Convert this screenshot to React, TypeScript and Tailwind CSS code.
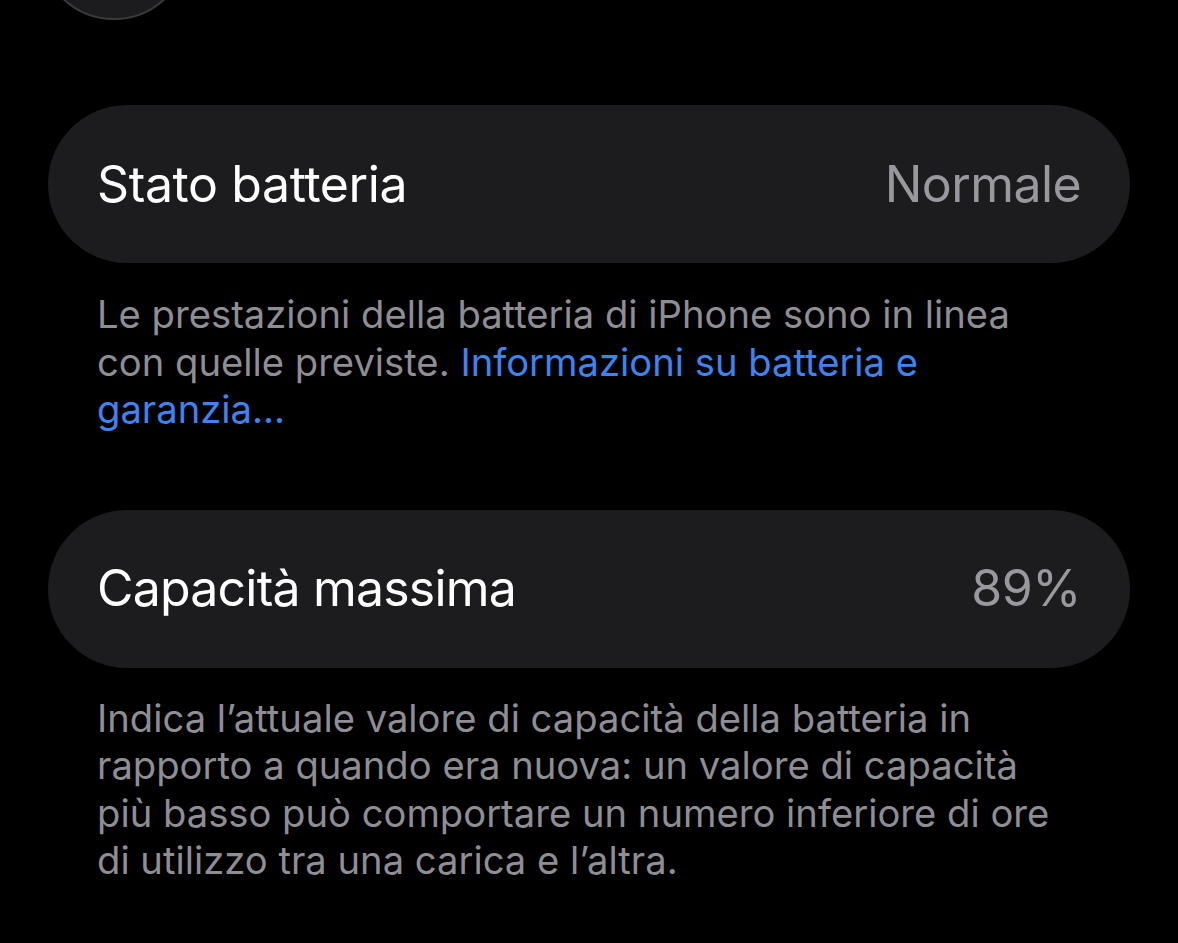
export default function App() {
  return (
    <div className="min-h-[943px] w-[1178px] overflow-hidden bg-black" style={{ fontFamily: "Inter, 'Noto Sans', sans-serif" }}>
      <div className="-mt-[130px] ml-[39px] h-[150px] w-[150px] rounded-full border-2 border-[#3a3a3c] bg-[#1c1c1e]" />
      <div className="mx-[48px] mt-[85px]">
        <div className="flex h-[158px] items-center justify-between rounded-full bg-[#1c1c1e] px-[49px]">
          <span className="text-[50px] tracking-[-0.4px] text-white">Stato batteria</span>
          <span className="text-[50px] tracking-[-0.6px] text-[#98989f]">Normale</span>
        </div>
        <p className="mt-[28px] pl-[49px] pr-[40px] text-[38.2px] leading-[47.5px] text-[#8e8e93]">
          Le prestazioni della batteria di iPhone sono in linea
          <br />
          con quelle previste. <span className="text-[#3d84f0]">Informazioni su batteria e</span>
          <br />
          <span className="text-[#3d84f0]">garanzia...</span>
        </p>
        <div className="mt-[76px] flex h-[158px] items-center justify-between rounded-full bg-[#1c1c1e] px-[49px]">
          <span className="text-[50px] tracking-[-0.8px] text-white">Capacità massima</span>
          <span className="text-[50px] tracking-[-0.4px] text-[#98989f]">89%</span>
        </div>
        <p className="mt-[27px] pl-[49px] pr-[40px] text-[38.2px] leading-[47.5px] text-[#8e8e93]">
          Indica l’attuale valore di capacità della batteria in
          <br />
          rapporto a quando era nuova: un valore di capacità
          <br />
          più basso può comportare un numero inferiore di ore
          <br />
          di utilizzo tra una carica e l’altra.
        </p>
      </div>
    </div>
  );
}
